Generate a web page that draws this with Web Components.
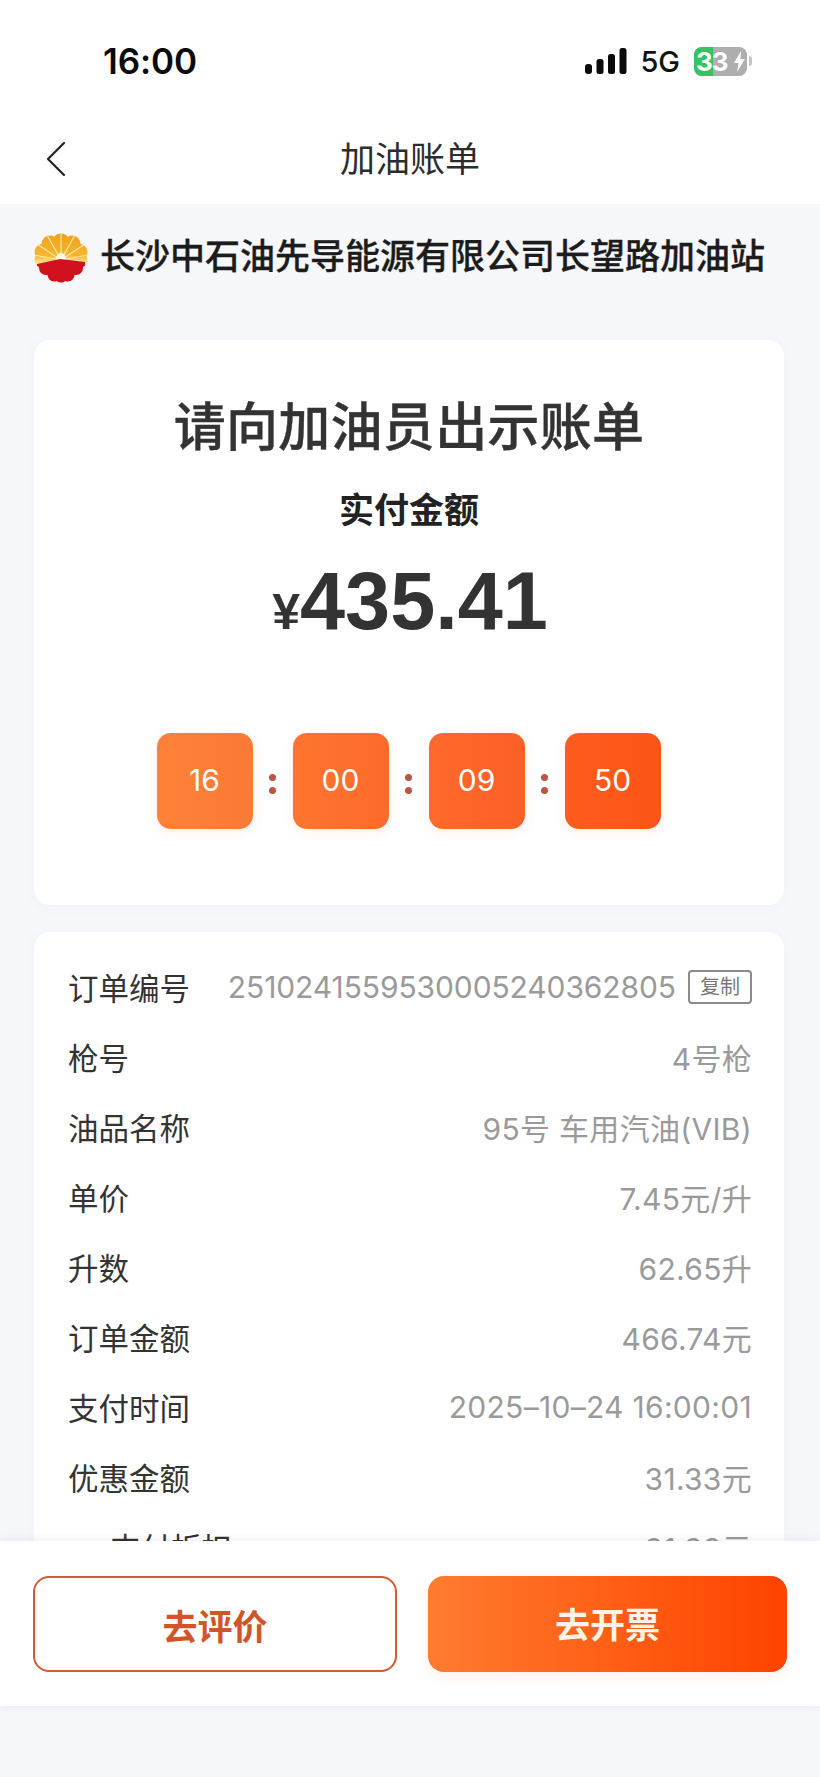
<!DOCTYPE html>
<html lang="zh-CN">
<head>
<meta charset="utf-8">
<title>加油账单</title>
<style>
  html, body { margin: 0; padding: 0; background: #f6f7fb; }
  body { font-family: "Liberation Sans", "Noto Sans CJK SC", sans-serif; }
</style>
</head>
<body>
<bill-page>
  <status-bar slot="top" time="16:00"></status-bar>
  <nav-header slot="top">加油账单</nav-header>
  <station-title>长沙中石油先导能源有限公司长望路加油站</station-title>
  <pay-card heading="请向加油员出示账单" label="实付金额" amount="435.41">
    <time-box>16</time-box><time-box>00</time-box><time-box>09</time-box><time-box>50</time-box>
  </pay-card>
  <detail-card>
    <detail-row label="订单编号" copy>2510241559530005240362805</detail-row>
    <detail-row label="枪号">4号枪</detail-row>
    <detail-row label="油品名称">95号 车用汽油(VIB)</detail-row>
    <detail-row label="单价">7.45元/升</detail-row>
    <detail-row label="升数">62.65升</detail-row>
    <detail-row label="订单金额">466.74元</detail-row>
    <detail-row label="支付时间">2025–10–24 16:00:01</detail-row>
    <detail-row label="优惠金额">31.33元</detail-row>
    <detail-row label="支付折扣" sub>31.33元</detail-row>
  </detail-card>
  <action-bar slot="bottom"></action-bar>
</bill-page>

<script>
const fontStack = '"Liberation Sans", "Noto Sans CJK SC", sans-serif';
const valueStack = 'Inter, "Noto Sans CJK SC", sans-serif';

function define(name, html, setup) {
  customElements.define(name, class extends HTMLElement {
    connectedCallback() {
      if (this.shadowRoot) return;
      const root = this.attachShadow({ mode: 'open' });
      root.innerHTML = typeof html === 'function' ? html(this) : html;
      if (setup) setup(this, root);
    }
  });
}

// Full-window column: fixed top, clipped scrolling middle, action bar, empty tail
define('bill-page', `
  <style>
    :host { display: flex; flex-direction: column; height: 100vh; overflow: hidden; background: #f6f7fb; color: #333; font-family: ${fontStack}; }
    .top { flex: none; background: #fff; }
    .scroll { flex: 1; min-height: 0; overflow: hidden; padding: 0 36px 0 34px; display: flex; flex-direction: column; }
    .bottom { flex: none; margin-bottom: 71px; position: relative; }
  </style>
  <div class="top"><slot name="top"></slot></div>
  <div class="scroll"><slot></slot></div>
  <div class="bottom"><slot name="bottom"></slot></div>
`);

define('status-bar', el => `
  <style>
    :host { display: flex; align-items: center; height: 122px; box-sizing: border-box; padding: 0 68px 0 103px; }
    .time { font: 600 35px/1 Inter, "Liberation Sans", sans-serif; color: #0b0b0b; flex: 1; letter-spacing: -.1px; }
    .right { display: flex; align-items: center; }
    .net { font: 500 29px/1 Inter, "Liberation Sans", sans-serif; color: #111; margin: 0 14px 0 13px; }
    .batt { position: relative; width: 53px; height: 29px; border-radius: 8px; overflow: hidden; background: #aeaeae; font: 700 26px/29px Inter, "Liberation Sans", sans-serif; color: #fff; padding-left: 2px; box-sizing: border-box; white-space: nowrap; letter-spacing: -1px; }
    .fill { position: absolute; left: 0; top: 0; bottom: 0; width: 19px; background: #34c263; }
    .batt span { position: relative; }
    .batt svg { position: absolute; right: 1px; top: 4px; }
    .tip { width: 3px; height: 10px; background: #c4c4c4; border-radius: 0 3px 3px 0; margin-left: 2px; }
  </style>
  <div class="time">${el.getAttribute('time')}</div>
  <div class="right">
    <svg width="42" height="26" viewBox="0 0 42 26" fill="#0b0b0b">
      <rect x="0" y="16" width="7" height="10" rx="3"/>
      <rect x="11.500" y="11" width="7" height="15" rx="2.500"/>
      <rect x="23" y="6" width="7" height="20" rx="2.500"/>
      <rect x="34.500" y="0" width="7" height="26" rx="2.500"/>
    </svg>
    <div class="net">5G</div>
    <div class="batt"><div class="fill"></div><span>33</span>
      <svg width="13" height="21" viewBox="0 0 13 21" fill="#fff"><path d="M8 0 1 12h4.500L4 21l8-13H7.500z"/></svg>
    </div>
    <div class="tip"></div>
  </div>
`);

define('nav-header', `
  <style>
    :host { display: flex; align-items: center; justify-content: center; position: relative; height: 69px; padding-bottom: 13px; font-size: 35px; color: #2c2c2c; font-family: ${fontStack}; }
    svg { position: absolute; left: 45px; top: 19px; }
  </style>
  <svg width="22" height="36" viewBox="0 0 22 36" fill="none" stroke="#222" stroke-width="2.200" stroke-linecap="round" stroke-linejoin="round"><path d="M19 2 3 18l16 16"/></svg>
  <slot></slot>
`);

define('station-title', `
  <style>
    :host { display: flex; flex: none; align-items: center; height: 104px; font-size: 35px; font-weight: 500; color: #1c1c1c; white-space: nowrap; font-family: ${fontStack}; -webkit-text-stroke: .3px #1c1c1c; }
    svg { flex: none; margin-right: 12px; margin-top: 4px; }
    span { margin-bottom: 6px; }
  </style>
  <svg width="54" height="50" viewBox="0 0 54 50">
    <defs>
      <clipPath id="flower">
        <circle cx="27" cy="9" r="8.500"/><circle cx="16" cy="11" r="8.500"/><circle cx="38" cy="11" r="8.500"/>
        <circle cx="8.500" cy="19" r="8"/><circle cx="45.500" cy="19" r="8"/>
        <circle cx="8" cy="27" r="7.500"/><circle cx="46" cy="27" r="7.500"/>
        <circle cx="12" cy="35" r="7"/><circle cx="42" cy="35" r="7"/>
        <circle cx="20" cy="42" r="6.500"/><circle cx="34" cy="42" r="6.500"/>
        <circle cx="27" cy="43" r="6.500"/><circle cx="27" cy="25" r="19"/>
      </clipPath>
      <linearGradient id="petal" x1="0" y1="0" x2="0" y2="1">
        <stop offset="0" stop-color="#f0a01c"/><stop offset=".45" stop-color="#f6b72c"/><stop offset=".62" stop-color="#fde9a0"/>
      </linearGradient>
    </defs>
    <g clip-path="url(#flower)">
      <rect width="54" height="50" fill="url(#petal)"/>
      <g stroke="#ffe9a6" stroke-width="1.200">
        <path d="M27 27 27 0M27 27 13 2M27 27 41 2M27 27 3 11M27 27 51 11M27 27 0 22M27 27 54 22"/>
      </g>
      <circle cx="27" cy="25" r="5" fill="#fffbe8"/>
      <path d="M26 26 3 31V50H51V29Z" fill="#d0101c"/>
    </g>
  </svg>
  <span><slot></slot></span>
`);

define('pay-card', el => `
  <style>
    :host { display: block; flex: none; height: 565px; margin-top: 32px; box-sizing: border-box; background: #fff; border-radius: 16px; box-shadow: 0 2px 14px rgba(70,80,120,.03); padding-top: 55px; text-align: center; font-family: ${fontStack}; }
    h1 { margin: 0; font-size: 52px; line-height: 66px; font-weight: 500; color: #333; letter-spacing: .3px; -webkit-text-stroke: .4px #333; }
    .label { font-size: 35px; line-height: 44px; font-weight: 700; color: #222; margin-top: 28px; }
    .amount { font-weight: 700; font-size: 81px; line-height: 92px; color: #333; margin-top: 22px; padding-left: 2px; }
    .amount small { font-size: 50px; font-weight: 700; }
    .timer { display: flex; justify-content: center; align-items: center; gap: 0; margin-top: 75px; padding-right: 1px; }
    ::slotted(time-box:not(:first-child)) { margin-left: 40px; }
  </style>
  <h1>${el.getAttribute('heading')}</h1>
  <div class="label">${el.getAttribute('label')}</div>
  <div class="amount"><small>¥</small>${el.getAttribute('amount')}</div>
  <div class="timer"><slot></slot></div>
`);

// One gradient tile of the countdown; tiles after the first carry a leading colon
define('time-box', el => {
  const sibs = [...el.parentNode.children];
  const i = sibs.indexOf(el);
  const shades = [['#ff8138', '#fb7a35'], ['#ff7530', '#fd6a2b'], ['#ff6a2c', '#fc5f26'], ['#ff5c1f', '#fb5416']];
  return `
  <style>
    :host { display: block; position: relative; width: 96px; height: 96px; border-radius: 14px; background: linear-gradient(90deg, ${shades[i][0]}, ${shades[i][1]}); box-shadow: 0 3px 12px rgba(255,100,40,.10); color: #fff; font: 400 30px/94px ${valueStack}; text-align: center; }
    .colon { position: absolute; left: -24px; top: 41px; width: 7px; }
    .colon i { display: block; width: 7px; height: 7px; border-radius: 50%; background: #b85543; margin-bottom: 6px; }
  </style>
  ${i ? '<div class="colon"><i></i><i></i></div>' : ''}<slot></slot>`;
});

define('detail-card', `
  <style>
    :host { display: block; flex: none; margin-top: 27px; padding: 20px 32px 20px 34px; background: #fff; border-radius: 16px; box-shadow: 0 2px 14px rgba(70,80,120,.03); font-family: ${fontStack}; }
  </style>
  <slot></slot>
`);

define('detail-row', el => `
  <style>
    :host { display: flex; align-items: center; justify-content: space-between; height: 70px; font-size: 30px; white-space: nowrap; }
    .label { color: #333; font-size: 30.500px; ${el.hasAttribute('sub') ? 'padding-left: 42px;' : ''} }
    .value { display: flex; align-items: center; color: #9a9a9a; font-family: ${valueStack}; font-weight: 400; letter-spacing: ${el.hasAttribute('copy') ? '-.1px' : '.3px'}; }
    .copy { margin-left: 12px; width: 64px; height: 34px; box-sizing: border-box; border: 2px solid #8a8a8a; border-radius: 4px; color: #777; font-size: 20px; line-height: 30px; text-align: center; letter-spacing: 0; }
  </style>
  <div class="label">${el.getAttribute('label')}</div>
  <div class="value"><slot></slot>${el.hasAttribute('copy') ? '<div class="copy">复制</div>' : ''}</div>
`);

define('action-bar', `
  <style>
    :host { display: flex; justify-content: space-between; height: 165px; box-sizing: border-box; padding: 35px 33px 34px 33px; background: #fff; position: relative; box-shadow: 0 -2px 10px rgba(60,60,80,.05), 0 2px 10px rgba(60,60,80,.03); font-family: ${fontStack}; }
    div { display: flex; align-items: center; justify-content: center; height: 96px; box-sizing: border-box; border-radius: 16px; font-size: 35px; font-weight: 700; }
    .ghost { width: 364px; border: 2px solid #cf5a33; color: #d0552b; }
    .solid { width: 359px; background: linear-gradient(90deg, #ff7c2e, #ff4200); color: #fff5e6; box-shadow: 0 4px 14px rgba(255,90,30,.10); padding-bottom: 4px; }
  </style>
  <div class="ghost">去评价</div>
  <div class="solid">去开票</div>
`);
</script>
</body>
</html>
